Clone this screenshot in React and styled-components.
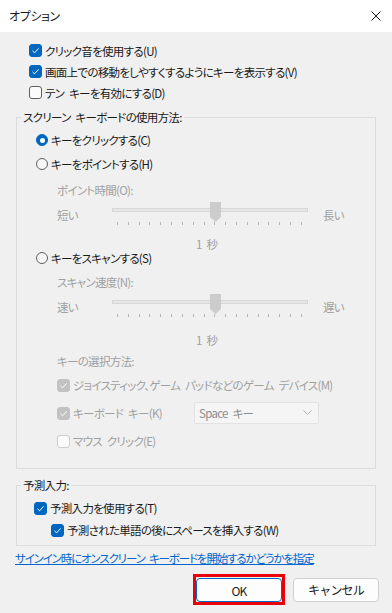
import React from 'react';
import styled, { createGlobalStyle } from 'styled-components';

const GlobalStyle = createGlobalStyle`
  html, body { margin: 0; padding: 0; }
  body {
    font-family: 'Noto Sans CJK JP', 'Noto Sans', sans-serif;
    font-size: 12px;
    color: #1a1a1a;
    background: #f0f0f0;
  }
`;

const Window = styled.div`
  width: 392px;
  height: 613px;
  background: #f0f0f0;
  overflow: hidden;
  display: flex;
  flex-direction: column;
  font-size: 11.5px;
  letter-spacing: -0.7px;
  word-spacing: 3px;
  font-feature-settings: 'palt';
`;

// タイトルバー
const TitleBar = styled.div`
  height: 32px;
  flex: none;
  background: #ffffff;
  display: flex;
  align-items: center;
  justify-content: space-between;
  padding: 0 11px 0 9px;
`;

const Title = styled.span`
  font-size: 12px;
  line-height: 16px;
  letter-spacing: -0.4px;
`;

const CloseButton = styled.svg`
  width: 10px;
  height: 10px;
`;

const TopChecks = styled.div`
  padding: 8px 0 0 29px;
  display: flex;
  flex-direction: column;
`;

const Row = styled.label`
  height: ${p => p.$h || 21}px;
  margin-top: ${p => p.$mt || 0}px;
  padding-left: ${p => p.$indent || 0}px;
  display: flex;
  align-items: center;
  gap: ${p => p.$gap || 3}px;
  color: ${p => (p.$disabled ? '#a0a0a0' : '#1a1a1a')};
  white-space: nowrap;
`;

const Box = styled.span`
  width: 13px;
  height: 13px;
  flex: none;
  box-sizing: border-box;
  border-radius: 3px;
  display: flex;
  align-items: center;
  justify-content: center;
  background: ${p =>
    p.$checked ? (p.$disabled ? '#c2c2c2' : '#0067c0') : '#fbfbfb'};
  border: 1px solid
    ${p =>
      p.$checked
        ? p.$disabled
          ? '#c2c2c2'
          : '#0067c0'
        : p.$disabled
        ? '#cccccc'
        : '#5f5f5f'};
`;

const Check = ({ checked, disabled }) => (
  <Box $checked={checked} $disabled={disabled}>
    {checked && (
      <svg width="9" height="9" viewBox="0 0 9 9">
        <path d="M1.5 4.8 L3.6 6.8 L7.6 2.4" fill="none" stroke="#fff" strokeWidth="1" />
      </svg>
    )}
  </Box>
);

const RadioDot = styled.span`
  width: 12px;
  height: 12px;
  flex: none;
  box-sizing: border-box;
  border-radius: 50%;
  display: flex;
  align-items: center;
  justify-content: center;
  background: ${p => (p.$on ? '#0067c0' : '#f8f8f8')};
  border: 1px solid ${p => (p.$on ? '#0067c0' : '#5f5f5f')};

  &::after {
    content: '';
    display: ${p => (p.$on ? 'block' : 'none')};
    width: 5px;
    height: 5px;
    border-radius: 50%;
    background: #ffffff;
  }
`;

// グループ枠
const Group = styled.fieldset`
  margin: ${p => p.$mt}px 16px 0;
  padding: ${p => p.$pt}px 0 ${p => p.$pb}px 0;
  border: 1px solid #dcdcdc;
  min-width: 0;
  display: flex;
  flex-direction: column;
`;

const Legend = styled.legend`
  margin-left: 4px;
  padding: 0 2px;
  line-height: 16px;
`;

const SubLabel = styled.div`
  height: ${p => p.$h || 24}px;
  margin-top: ${p => p.$mt || 0}px;
  padding-left: 40px;
  display: flex;
  align-items: center;
  color: #a0a0a0;
`;

const SliderRow = styled.div`
  height: 34px;
  padding-left: 40px;
  display: flex;
  align-items: flex-start;
  color: #a0a0a0;
`;

const SideLabel = styled.span`
  width: ${p => p.$w}px;
  flex: none;
  margin-top: 5px;
  margin-left: ${p => p.$ml || 0}px;
  line-height: 16px;
`;

const Track = styled.div`
  position: relative;
  width: 196px;
  height: 34px;
  flex: none;
`;

const Rail = styled.div`
  margin-top: 6px;
  height: 4px;
  box-sizing: border-box;
  background: #e6e6e6;
  border: 1px solid #d7d7d7;
`;

const Ticks = styled.div`
  margin: 10px 6px 0 5px;
  display: flex;
  justify-content: space-between;
`;

const Tick = styled.span`
  width: 1px;
  height: 3px;
  background: #b4b4b4;
`;

const Thumb = styled.svg`
  position: absolute;
  top: 0;
  left: 98px;
  width: 11px;
  height: 20px;
`;

const Slider = ({ left, right }) => (
  <SliderRow>
    <SideLabel $w={55}>{left}</SideLabel>
    <Track>
      <Rail />
      <Ticks>
        {Array.from({ length: 18 }).map((_, i) => (
          <Tick key={i} />
        ))}
      </Ticks>
      <Thumb viewBox="0 0 11 20">
        <path d="M0 0 H11 V15 L5.5 20 L0 15 Z" fill="#cccccc" />
      </Thumb>
    </Track>
    <SideLabel $w={40} $ml={15}>{right}</SideLabel>
  </SliderRow>
);

const Value = styled.div`
  height: 16px;
  margin-top: ${p => p.$mt || 0}px;
  display: flex;
  align-items: center;
  padding-left: 179px;
  color: #a0a0a0;
`;

const Select = styled.div`
  width: 125px;
  height: 22px;
  box-sizing: border-box;
  margin-left: auto;
  margin-right: 56px;
  padding: 0 6px 0 4px;
  display: flex;
  align-items: center;
  justify-content: space-between;
  background: #f5f5f5;
  border: 1px solid #e2e2e2;
  border-radius: 2px;
  color: #8c8c8c;
`;

const Link = styled.a`
  display: block;
  margin: 4px 0 0 15px;
  line-height: 16px;
  color: #0066cc;
  text-decoration: underline;
  letter-spacing: -1.15px;
  white-space: nowrap;
`;

const Buttons = styled.div`
  margin-top: 8px;
  padding-right: 13px;
  display: flex;
  justify-content: flex-end;
  align-items: center;
  gap: 8px;
`;

// 赤い強調枠
const Highlight = styled.span`
  display: flex;
  border: 3px solid #e8000b;
  padding: 1px 0 0;
`;

const Button = styled.button`
  width: 86px;
  height: 24px;
  box-sizing: border-box;
  border-radius: 4px;
  font-family: inherit;
  font-size: 12px;
  letter-spacing: -0.8px;
  color: #1a1a1a;
  background: #fdfdfd;
  border: 1px solid ${p => (p.$primary ? '#0067c0' : '#d0d0d0')};
  padding: 0;
`;

const App = () => (
  <>
    <GlobalStyle />
    <Window>
      <TitleBar>
        <Title>オプション</Title>
        <CloseButton viewBox="0 0 10 10">
          <path d="M0.5 0.5 L9.5 9.5 M9.5 0.5 L0.5 9.5" stroke="#1a1a1a" strokeWidth="1" />
        </CloseButton>
      </TitleBar>

      <TopChecks>
        <Row>
          <Check checked />
          クリック音を使用する(U)
        </Row>
        <Row>
          <Check checked />
          画面上での移動をしやすくするようにキーを表示する(V)
        </Row>
        <Row>
          <Check />
          テン キーを有効にする(D)
        </Row>
      </TopChecks>

      <Group $mt={6} $pt={3} $pb={13}>
        <Legend>スクリーン キーボードの使用方法:</Legend>
        <Row $h={24} $indent={19}>
          <RadioDot $on />
          キーをクリックする(C)
        </Row>
        <Row $h={24} $indent={19}>
          <RadioDot />
          キーをポイントする(H)
        </Row>
        <SubLabel $mt={2}>ポイント時間(O):</SubLabel>
        <Slider left="短い" right="長い" />
        <Value>1 秒</Value>
        <Row $h={12} $indent={19}>
          <RadioDot />
          キーをスキャンする(S)
        </Row>
        <SubLabel $mt={6}>スキャン速度(N):</SubLabel>
        <Slider left="速い" right="遅い" />
        <Value $mt={4}>1 秒</Value>
        <SubLabel $h={20} $mt={3}>キーの選択方法:</SubLabel>
        <Row $h={28} $indent={40} $disabled>
          <Check checked disabled />
          ジョイスティック、ゲーム パッドなどのゲーム デバイス(M)
        </Row>
        <Row $h={28} $indent={40} $disabled>
          <Check checked disabled />
          キーボード キー(K)
          <Select>
            <span>Space キー</span>
            <svg width="9" height="6" viewBox="0 0 9 6">
              <path d="M0.5 0.5 L4.5 4.5 L8.5 0.5" fill="none" stroke="#b0b0b0" strokeWidth="1" />
            </svg>
          </Select>
        </Row>
        <Row $h={28} $indent={40} $disabled>
          <Check disabled />
          マウス クリック(E)
        </Row>
      </Group>

      <Group $mt={8} $pt={4} $pb={4}>
        <Legend>予測入力:</Legend>
        <Row $h={22} $indent={17}>
          <Check checked />
          予測入力を使用する(T)
        </Row>
        <Row $h={22} $indent={34}>
          <Check checked />
          予測された単語の後にスペースを挿入する(W)
        </Row>
      </Group>

      <Link href="#">サインイン時にオンスクリーン キーボードを開始するかどうかを指定</Link>

      <Buttons>
        <Highlight>
          <Button $primary>OK</Button>
        </Highlight>
        <Button>キャンセル</Button>
      </Buttons>
    </Window>
  </>
);

export default App;
